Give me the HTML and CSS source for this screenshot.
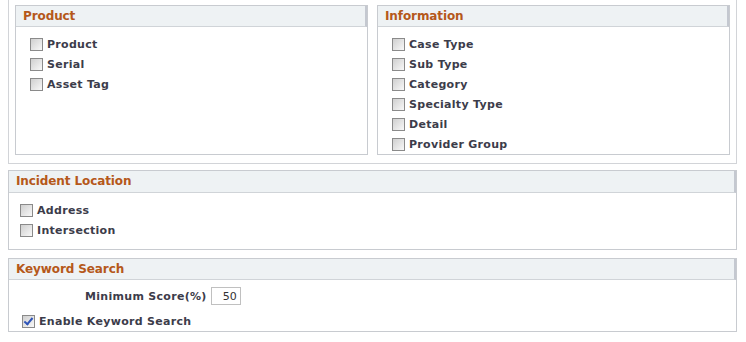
FILE: index.html
```html
<!DOCTYPE html>
<html lang="en">
<head>
    <meta charset="UTF-8">
    <title>Search Options</title>
    <link rel="stylesheet" href="styles.css">
</head>
<body>

    <div class="group">
        <div class="box">
            <div class="box-title">Product</div>
            <div class="box-body">
                <label class="row"><input type="checkbox"> Product</label>
                <label class="row"><input type="checkbox"> Serial</label>
                <label class="row"><input type="checkbox"> Asset Tag</label>
            </div>
        </div>
        <div class="box">
            <div class="box-title">Information</div>
            <div class="box-body">
                <label class="row"><input type="checkbox"> Case Type</label>
                <label class="row"><input type="checkbox"> Sub Type</label>
                <label class="row"><input type="checkbox"> Category</label>
                <label class="row"><input type="checkbox"> Specialty Type</label>
                <label class="row"><input type="checkbox"> Detail</label>
                <label class="row"><input type="checkbox"> Provider Group</label>
            </div>
        </div>
    </div>

    <div class="box wide">
        <div class="box-title loc-title">Incident Location</div>
        <div class="box-body loc">
            <label class="row"><input type="checkbox"> Address</label>
            <label class="row"><input type="checkbox"> Intersection</label>
        </div>
    </div>

    <div class="box wide kw-box">
        <div class="box-title">Keyword Search</div>
        <div class="box-body kw">
            <div class="score">
                <label for="score">Minimum Score(%)</label>
                <input type="text" id="score" value="50">
            </div>
            <label class="row"><input type="checkbox" checked> Enable Keyword Search</label>
        </div>
    </div>

</body>
</html>
```

FILE: styles.css
```css
body { margin: 0; font-family: "DejaVu Sans", Verdana, sans-serif; font-size: 11px; font-weight: bold; color: #3c3c4a; background: #fff; letter-spacing: 0.3px; }
.group { display: flex; gap: 9px; width: 715px; margin-left: 8px; padding: 5px 6px 8px 6px; border: 1px solid #d2d4d8; border-top: none; }
.box { flex: 1; border: 1px solid #c8cbd0; background: #fff; }
.box-title { height: 20px; line-height: 20px; padding-left: 7px; background: #eef2f4; border-bottom: 1px solid #d0d4d8; border-right: 2px solid #c4c8d0; color: #b5581a; font-size: 12px; letter-spacing: -0.1px; }
.box-body { padding: 7px 0 0 14px; }
.row { display: flex; align-items: center; height: 20px; }
.row input { appearance: none; width: 13px; height: 13px; margin: 0 4px 0 0; border: 1px solid #8a8a8a; background: linear-gradient(135deg, #cfcfcf, #f8f8f8); position: relative; }
.row input:checked::after { content: ""; position: absolute; left: 3px; top: 0px; width: 3px; height: 7px; border: solid #2e54b8; border-width: 0 2px 2px 0; transform: rotate(40deg); }
.wide { width: 727px; margin: 6px 0 0 8px; }
.kw-box { margin-top: 8px; }
.box-title.loc-title { height: 21px; line-height: 21px; }
.loc { padding: 7px 0 9px 11px; }
.kw { padding: 7px 0 0 13px; }
.score { display: flex; align-items: center; gap: 4px; margin-left: 63px; height: 18px; margin-bottom: 6px; }
.score input { width: 25px; height: 16px; padding: 0 3px 0 0; border: 1px solid #c0c0c0; text-align: right; font-family: "DejaVu Sans", Verdana, sans-serif; font-size: 11px; font-weight: normal; color: #333; }
```
